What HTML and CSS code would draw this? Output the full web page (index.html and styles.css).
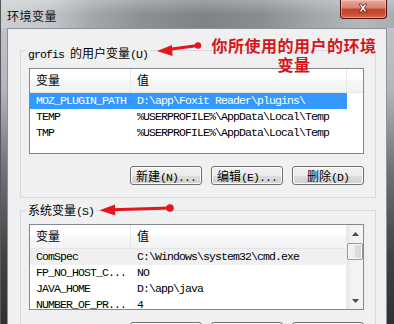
FILE: index.html
```html
<!DOCTYPE html>
<html lang="zh-CN">
<head>
<meta charset="utf-8">
<title>环境变量</title>
<link rel="stylesheet" href="styles.css">
</head>
<body>
<div class="window">
  <div class="titlebar">
    <span class="title">环境变量</span>
    <div class="close">
      <svg width="47" height="19" viewBox="0 0 47 19">
        <path d="M19.5 5 L22 5 L23.5 7.2 L25 5 L27.5 5 L25 9 L27.5 13 L25 13 L23.5 10.8 L22 13 L19.5 13 L22 9 Z" fill="#fff" stroke="#5a1a10" stroke-width="0.8"/>
      </svg>
    </div>
  </div>
  <div class="client">
    <fieldset class="group g1">
      <legend><span class="m">grofis </span>的用户变量<span class="m">(U)</span></legend>
      <div class="list">
        <div class="lv">
          <div class="hdr"><div class="c1">变量</div><div class="c2">值</div><div class="c3"></div></div>
          <div class="row sel"><div class="c1 m">MOZ_PLUGIN_PATH</div><div class="c2 m">D:\app\Foxit Reader\plugins\</div></div>
          <div class="row"><div class="c1 m">TEMP</div><div class="c2 m">%USERPROFILE%\AppData\Local\Temp</div></div>
          <div class="row"><div class="c1 m">TMP</div><div class="c2 m">%USERPROFILE%\AppData\Local\Temp</div></div>
        </div>
      </div>
      <div class="btns">
        <button class="btn">新建<span class="m">(N)...</span></button>
        <button class="btn">编辑<span class="m">(E)...</span></button>
        <button class="btn">删除<span class="m">(D)</span></button>
      </div>
    </fieldset>
    <fieldset class="group g2">
      <legend>系统变量<span class="m">(S)</span></legend>
      <div class="list">
        <div class="lv">
          <div class="hdr"><div class="c1">变量</div><div class="c2">值</div></div>
          <div class="row inactive"><div class="c1 m">ComSpec</div><div class="c2 m">C:\Windows\system32\cmd.exe</div></div>
          <div class="row"><div class="c1 m">FP_NO_HOST_C...</div><div class="c2 m">NO</div></div>
          <div class="row"><div class="c1 m">JAVA_HOME</div><div class="c2 m">D:\app\java</div></div>
          <div class="row"><div class="c1 m">NUMBER_OF_PR...</div><div class="c2 m">4</div></div>
        </div>
        <div class="sb">
          <div class="arr"><svg width="7" height="4" viewBox="0 0 7 4"><path d="M3.5 0 L7 4 L0 4 Z" fill="#4a4a4a"/></svg></div>
          <div class="thumb"></div>
          <div class="track"></div>
          <div class="arr"><svg width="7" height="4" viewBox="0 0 7 4"><path d="M0 0 L7 0 L3.5 4 Z" fill="#4a4a4a"/></svg></div>
        </div>
      </div>
      <div class="btns">
        <button class="btn">新建<span class="m">(W)...</span></button>
        <button class="btn">编辑<span class="m">(I)...</span></button>
        <button class="btn">删除<span class="m">(L)</span></button>
      </div>
    </fieldset>
  </div>
</div>
<div class="note">你所使用的用户的环境<br>变量</div>
<svg class="arrows" width="394" height="324" viewBox="0 0 394 324">
  <line x1="168" y1="49.5" x2="198" y2="45.5" stroke="#e3161c" stroke-width="3"/>
  <polygon points="157,51 172,45 172.5,56" fill="#e3161c"/>
  <circle cx="198" cy="45.5" r="3.2" fill="#e3161c"/>
  <line x1="112" y1="209.8" x2="170" y2="208" stroke="#e3161c" stroke-width="3"/>
  <polygon points="99.5,210.2 115,204.5 115.3,215.5" fill="#e3161c"/>
  <circle cx="170" cy="208" r="3.8" fill="#e3161c"/>
</svg>
</body>
</html>
```

FILE: styles.css
```css
* { box-sizing: border-box; }
html, body { margin: 0; padding: 0; }
body {
  width: 394px;
  height: 324px;
  overflow: hidden;
  position: relative;
  background: #4a4d50;
  font-family: "Noto Sans CJK SC", sans-serif;
  font-size: 12px;
  color: #000;
}
.m {
  font-family: "Liberation Mono", "Noto Sans CJK SC", monospace;
  font-size: 11.5px;
  letter-spacing: -0.9px;
}
span.m { line-height: 8px; }
.window {
  height: 324px;
  display: flex;
  flex-direction: column;
  border-left: 1px solid #55585b;
  background: linear-gradient(to bottom, #c6cacd 0px, #b2b6ba 90px, #6e7276 170px, #3e4043 260px, #2e3032 324px);
}
.titlebar {
  height: 28px;
  flex: none;
  display: flex;
  justify-content: space-between;
  align-items: flex-start;
  padding: 0 7px 0 6px;
  background:
    linear-gradient(to bottom, rgba(255,255,255,0.25), rgba(255,255,255,0) 14px),
    linear-gradient(to right, #ccd0d3 0px, #c2c6c9 50px, #a3a8ad 90px, #8c9196 140px, #7e8388 200px, #888d92 260px, #a0a5aa 310px, #b4b8bc 360px, #a9adb1 394px);
}
.title {
  margin-top: 8px;
  line-height: 15px;
  font-size: 12px;
  letter-spacing: 0.5px;
  color: #111;
}
.close {
  width: 47px;
  height: 19px;
  border: 1px solid #4a1208;
  border-top: none;
  border-radius: 0 0 4px 4px;
  background: linear-gradient(to bottom, #e9aa9c 0%, #d88070 45%, #c2412c 50%, #c9482f 75%, #d86a4e 100%);
  box-shadow: inset 0 0 0 1px rgba(255,220,210,0.45);
  display: flex;
}
.close svg { display: block; margin: -1px 0 0 -1px; }
.client {
  flex: 1;
  margin: 0 7px 0 6px;
  background: #f0f0f0;
  border: 1px solid #8b949c;
  border-bottom: none;
  overflow: hidden;
}
.group {
  margin: 11px 10px 0 12px;
  padding: 8px 11px 12px 8px;
  border: 1px solid #d5dae0;
  min-width: 0;
}
.group legend {
  margin-left: -3px;
  padding: 0 2px;
  line-height: 14px;
}
.g1 legend { padding-top: 6px; }
.g2 { margin-top: 5px; padding-top: 7px; }
.list {
  height: 86px;
  border: 1px solid #828790;
  background: #fff;
  display: flex;
  overflow: hidden;
}
.lv { flex: 1; min-width: 0; }
.hdr {
  height: 24px;
  display: flex;
  border-bottom: 1px solid #e5e5e5;
  background: linear-gradient(to bottom, #ffffff 0%, #ffffff 45%, #f7f8f9 46%, #f2f3f5 100%);
  line-height: 22px;
}
.hdr .c1, .hdr .c2 { border-right: 1px solid #e3e6ea; }
.hdr .c3 { flex: 1; }
.c1 { width: 101px; padding-left: 6px; flex: none; white-space: nowrap; overflow: hidden; }
.c2 { width: 216px; padding-left: 6px; flex: none; white-space: nowrap; overflow: hidden; }
.row {
  height: 16px;
  width: 317px;
  display: flex;
  line-height: 16px;
}
.row.sel { background: #3399ff; color: #fff; }
.row.inactive { background: #f0f0f0; }
.sb {
  width: 17px;
  flex: none;
  display: flex;
  flex-direction: column;
  background: linear-gradient(to right, #e6e6e6 0px, #f2f2f2 4px, #f5f5f5 100%);
  border-left: 1px solid #ececec;
}
.arr {
  height: 17px;
  flex: none;
  display: flex;
  align-items: center;
  justify-content: center;
}
.thumb {
  height: 17px;
  flex: none;
  margin: 1px 0 0 0;
  border: 1px solid #979797;
  border-radius: 2px;
  background: linear-gradient(to right, #f4f4f4 0%, #ececec 50%, #dedede 51%, #d6d6d6 100%);
  box-shadow: inset 0 0 0 1px #fafafa;
}
.track { flex: 1; }
.btns {
  margin-top: 12px;
  display: flex;
  justify-content: flex-end;
  gap: 9px;
}
.btn {
  width: 72px;
  height: 19px;
  padding: 0;
  border: 1px solid #707070;
  border-radius: 3px;
  background: linear-gradient(to bottom, #f2f2f2 0%, #ebebeb 50%, #dddddd 51%, #cfcfcf 100%);
  box-shadow: inset 0 0 0 1px #fbfbfb;
  font-family: "Noto Sans CJK SC", sans-serif;
  font-size: 12px;
  line-height: 16px;
  color: #000;
}
.note {
  position: absolute;
  left: 210px;
  top: 36px;
  width: 168px;
  text-align: center;
  color: #d3161c;
  font-weight: bold;
  font-size: 16px;
  line-height: 19px;
  letter-spacing: 0.5px;
}
.arrows {
  position: absolute;
  left: 0;
  top: 0;
  pointer-events: none;
}
```
